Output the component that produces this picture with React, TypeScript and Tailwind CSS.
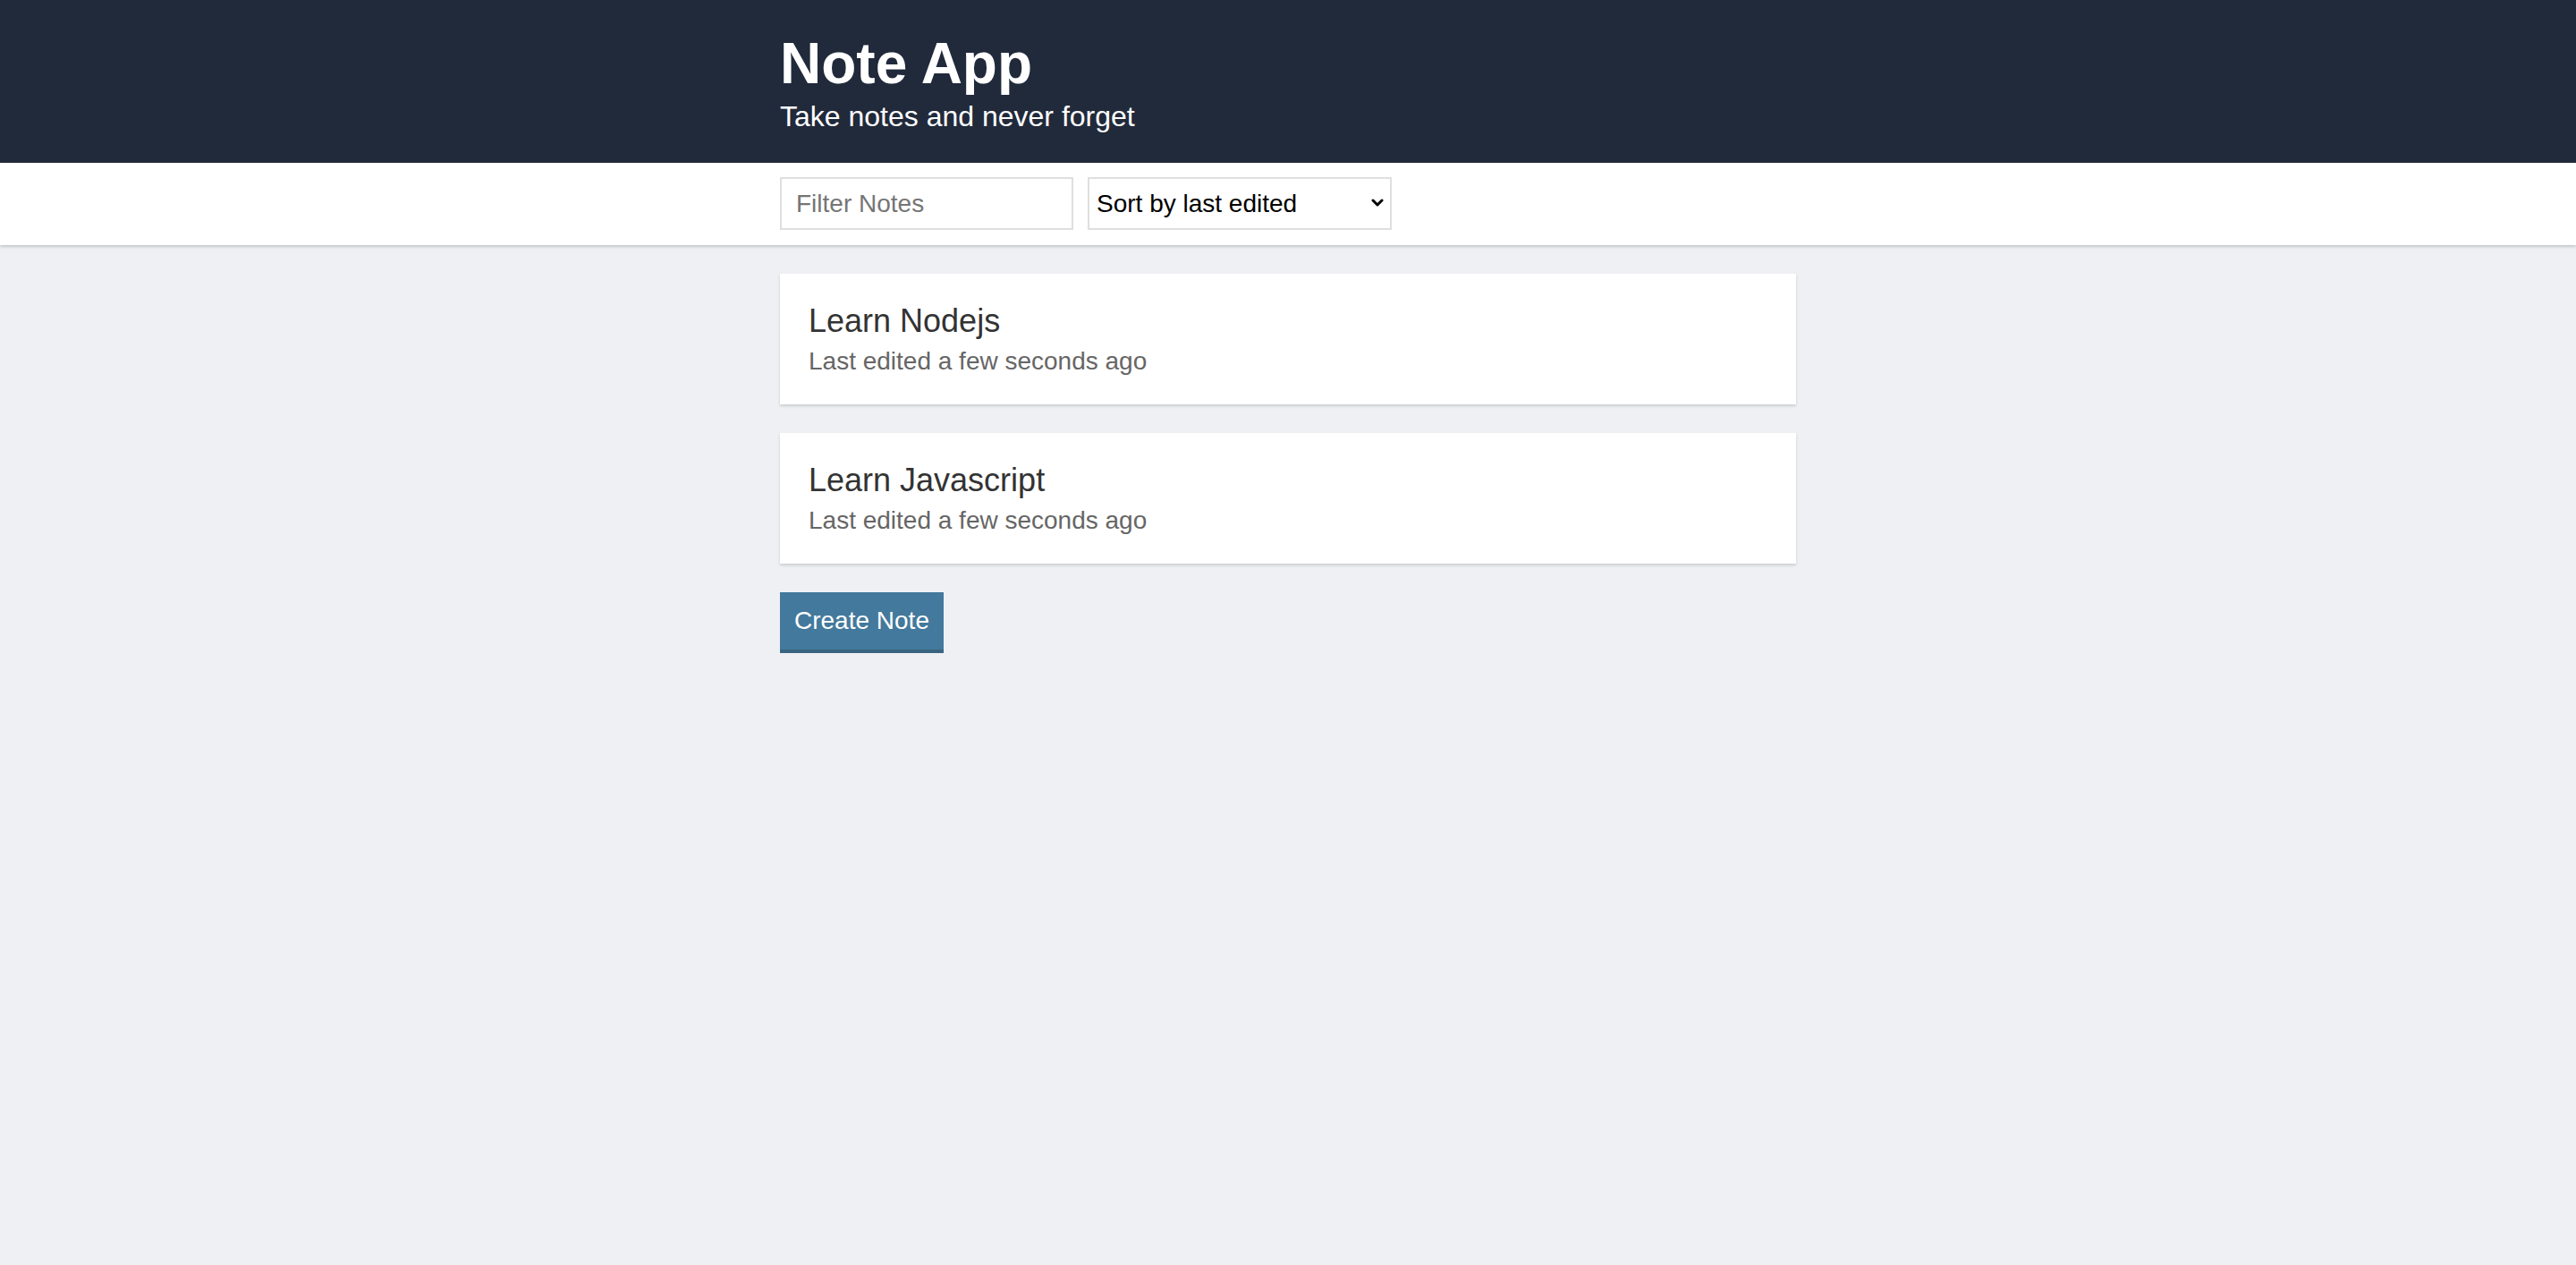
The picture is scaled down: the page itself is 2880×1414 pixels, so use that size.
import React from 'react';

const notes = [
  { id: 'n1', title: 'Learn Nodejs', edited: 'Last edited a few seconds ago' },
  { id: 'n2', title: 'Learn Javascript', edited: 'Last edited a few seconds ago' },
];

export default function App() {
  return (
    <div className="min-h-screen bg-[#eff0f4] font-['Liberation_Sans',Arial,sans-serif] text-[#333]">
      <header className="bg-[#212a3b] text-white">
        <div className="w-[1136px] mx-auto pt-[35px] pb-[33px]">
          <h1 className="text-[64px] leading-[72px] font-bold">Note App</h1>
          <p className="mt-[4px] text-[32px] leading-[38px]">Take notes and never forget</p>
        </div>
      </header>

      <div className="relative bg-white shadow-[0_2px_3px_rgba(0,0,0,0.18)]">
        <div className="w-[1136px] mx-auto pt-4 pb-[17px] flex gap-[16px]">
          <input
            type="text"
            placeholder="Filter Notes"
            className="w-[328px] h-[59px] border-2 border-[#dedfe0] pl-[16px] text-[28px] text-[#333] placeholder:text-[#757575] outline-none"
          />
          <div className="relative w-[340px] h-[59px]">
            <select className="appearance-none w-full h-full border-2 border-[#dedfe0] bg-white pl-[8px] text-[28px] text-black outline-none">
              <option>Sort by last edited</option>
              <option>Sort by recently created</option>
              <option>Sort alphabetically</option>
            </select>
            <svg
              className="absolute right-[9px] top-[24px] pointer-events-none"
              width="14"
              height="10"
              viewBox="0 0 14 10"
              fill="none"
            >
              <path d="M2 2l5 5 5-5" stroke="#000" strokeWidth="3" strokeLinecap="round" strokeLinejoin="round" />
            </svg>
          </div>
        </div>
      </div>

      <main className="w-[1136px] mx-auto pt-8 flex flex-col gap-8 items-start">
        {notes.map(note => (
          <div key={note.id} className="w-full bg-white px-8 pt-[31px] pb-[31px] shadow-[0_2px_3px_rgba(0,0,0,0.15)]">
            <h3 className="text-[36px] leading-[44px] text-[#333]">{note.title}</h3>
            <p className="mt-[6px] text-[28px] leading-[34px] text-[#666]">{note.edited}</p>
          </div>
        ))}

        <button className="h-[68px] px-4 bg-[#43799c] border-b-4 border-[#3a6580] text-white text-[28px] leading-[34px]">
          Create Note
        </button>
      </main>
    </div>
  );
}
